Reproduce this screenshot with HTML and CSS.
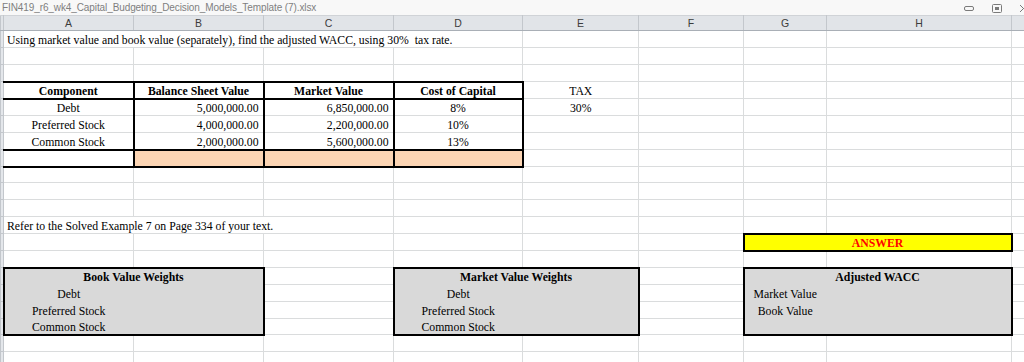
FILE: index.html
```html
<!DOCTYPE html>
<html>
<head>
<meta charset="utf-8">
<link rel="stylesheet" href="styles.css">
</head>
<body>
<div class="titlebar">
  <span class="doc-title">FIN419_r6_wk4_Capital_Budgeting_Decision_Models_Template (7).xlsx</span>
  <span class="win-ctrls">
    <svg class="ic-min" width="10" height="6" viewBox="0 0 10 6"><rect x="0.5" y="1.5" width="9" height="4" rx="1.5" fill="none" stroke="#7a7a7a"/></svg>
    <svg class="ic-rest" width="10" height="9" viewBox="0 0 10 9"><rect x="0.5" y="0.5" width="9" height="8" rx="1" fill="none" stroke="#7a7a7a"/><rect x="3" y="3" width="4" height="3" fill="#7a7a7a"/></svg>
    <svg class="ic-close" width="4" height="9" viewBox="0 0 4 9"><path d="M0 1 L4 5 M0 8 L4 4" stroke="#7a7a7a" fill="none"/></svg>
  </span>
</div>
<table class="sheet">
  <colgroup>
    <col class="c-rh"><col class="c-a"><col class="c-b"><col class="c-c"><col class="c-d"><col class="c-e"><col class="c-f"><col class="c-g"><col class="c-h"><col class="c-i">
  </colgroup>
  <thead>
    <tr class="colhdr">
      <th class="rh"></th><th>A</th><th>B</th><th>C</th><th>D</th><th>E</th><th>F</th><th>G</th><th>H</th><th></th>
    </tr>
  </thead>
  <tbody>
    <tr>
      <td class="rh"></td><td colspan="4">Using market value and book value (separately), find the adjusted WACC, using 30%&nbsp; tax rate.</td><td></td><td></td><td></td><td></td><td></td>
    </tr>
    <tr><td class="rh"></td><td></td><td></td><td></td><td></td><td></td><td></td><td></td><td></td><td></td></tr>
    <tr><td class="rh"></td><td></td><td></td><td></td><td></td><td></td><td></td><td></td><td></td><td></td></tr>
    <tr class="t-head">
      <td class="rh"></td><td class="th ctr vr">Component</td><td class="th ctr vr">Balance Sheet Value</td><td class="th ctr vr">Market Value</td><td class="th ctr vr">Cost of Capital</td><td class="ctr">TAX</td><td></td><td></td><td></td><td></td>
    </tr>
    <tr>
      <td class="rh"></td><td class="ctr vr">Debt</td><td class="num vr">5,000,000.00</td><td class="num vr">6,850,000.00</td><td class="ctr vr">8%</td><td class="ctr">30%</td><td></td><td></td><td></td><td></td>
    </tr>
    <tr>
      <td class="rh"></td><td class="ctr vr">Preferred Stock</td><td class="num vr">4,000,000.00</td><td class="num vr">2,200,000.00</td><td class="ctr vr">10%</td><td></td><td></td><td></td><td></td><td></td>
    </tr>
    <tr class="t-last">
      <td class="rh"></td><td class="ctr vr">Common Stock</td><td class="num vr">2,000,000.00</td><td class="num vr">5,600,000.00</td><td class="ctr vr">13%</td><td></td><td></td><td></td><td></td><td></td>
    </tr>
    <tr class="t-total">
      <td class="rh"></td><td class="vr"></td><td class="vr peach"></td><td class="vr peach"></td><td class="vr peach"></td><td></td><td></td><td></td><td></td><td></td>
    </tr>
    <tr class="short"><td class="rh"></td><td></td><td></td><td></td><td></td><td></td><td></td><td></td><td></td><td></td></tr>
    <tr><td class="rh"></td><td></td><td></td><td></td><td></td><td></td><td></td><td></td><td></td><td></td></tr>
    <tr><td class="rh"></td><td></td><td></td><td></td><td></td><td></td><td></td><td></td><td></td><td></td></tr>
    <tr>
      <td class="rh"></td><td colspan="3">Refer to the Solved Example 7 on Page 334 of your text.</td><td></td><td></td><td></td><td></td><td></td><td></td>
    </tr>
    <tr>
      <td class="rh"></td><td></td><td></td><td></td><td></td><td></td><td></td><td colspan="2" class="answer">ANSWER</td><td></td>
    </tr>
    <tr><td class="rh"></td><td></td><td></td><td></td><td></td><td></td><td></td><td></td><td></td><td></td></tr>
    <tr>
      <td class="rh"></td>
      <td colspan="2" class="box box-top th ctr">Book Value Weights</td>
      <td></td>
      <td colspan="2" class="box box-top th ctr">Market Value Weights</td>
      <td></td>
      <td colspan="2" class="box box-top th ctr">Adjusted WACC</td>
      <td></td>
    </tr>
    <tr>
      <td class="rh"></td>
      <td class="box box-l ctr">Debt</td><td class="box box-r"></td>
      <td></td>
      <td class="box box-l ctr">Debt</td><td class="box box-r"></td>
      <td></td>
      <td class="box box-l ctr">Market Value</td><td class="box box-r"></td>
      <td></td>
    </tr>
    <tr>
      <td class="rh"></td>
      <td class="box box-l ctr">Preferred Stock</td><td class="box box-r"></td>
      <td></td>
      <td class="box box-l ctr">Preferred Stock</td><td class="box box-r"></td>
      <td></td>
      <td class="box box-l ctr">Book Value</td><td class="box box-r"></td>
      <td></td>
    </tr>
    <tr class="short">
      <td class="rh"></td>
      <td class="box box-l box-b ctr">Common Stock</td><td class="box box-r box-b"></td>
      <td></td>
      <td class="box box-l box-b ctr">Common Stock</td><td class="box box-r box-b"></td>
      <td></td>
      <td class="box box-l box-b"></td><td class="box box-r box-b"></td>
      <td></td>
    </tr>
    <tr><td class="rh"></td><td></td><td></td><td></td><td></td><td></td><td></td><td></td><td></td><td></td></tr>
    <tr><td class="rh"></td><td></td><td></td><td></td><td></td><td></td><td></td><td></td><td></td><td></td></tr>
  </tbody>
</table>
</body>
</html>
```
FILE: styles.css
```css
html, body {
  margin: 0;
  padding: 0;
  background: #ffffff;
  overflow: hidden;
}

.titlebar {
  height: 15px;
  display: flex;
  align-items: center;
  justify-content: space-between;
  background: #f8f8f8;
  padding-left: 2px;
  box-sizing: border-box;
}

.doc-title {
  font-family: "Liberation Sans", Arial, sans-serif;
  font-size: 10px;
  color: #7f7f7f;
  white-space: nowrap;
  letter-spacing: -0.1px;
}

.win-ctrls {
  display: flex;
  align-items: center;
  gap: 18px;
  padding-top: 1px;
}

.sheet {
  border-collapse: collapse;
  table-layout: fixed;
  width: 1024px;
  font-family: "Liberation Serif", "Times New Roman", serif;
  font-size: 11.75px;
  color: #000;
}

.c-rh { width: 3px; }
.c-a { width: 130px; }
.c-b { width: 130px; }
.c-c { width: 130px; }
.c-d { width: 129px; }
.c-e { width: 116px; }
.c-f { width: 105px; }
.c-g { width: 83px; }
.c-h { width: 185px; }
.c-i { width: 13px; }

.sheet tr.colhdr {
  height: 15px;
}

.colhdr th {
  padding: 0;
  background: #e1e4e8;
  border: 1px solid #c3c7cc;
  border-top-color: #d0d3d7;
  border-bottom-color: #a9afb6;
  font-family: "Liberation Sans", Arial, sans-serif;
  font-weight: normal;
  font-size: 10.5px;
  line-height: 12px;
  color: #3c3c3c;
  text-align: center;
  vertical-align: middle;
}

.sheet tbody tr {
  height: 17px;
}

.sheet tbody tr.short {
  height: 16px;
}

.sheet td {
  padding: 0 3px;
  border: 1px solid #dadcdd;
  line-height: 13px;
  vertical-align: bottom;
  white-space: nowrap;
  overflow: hidden;
}

.sheet td.rh {
  padding: 0;
  background: #e4e7eb;
  border-color: #c3c7cc;
}

.ctr { text-align: center; }
.num { text-align: right; padding-right: 4px !important; }
.th { font-weight: bold; }

.t-head td.th {
  border-top: 2px solid #000;
  border-bottom: 2px solid #000;
}

.vr { border-right: 2px solid #000 !important; }

.t-last td.vr {
  border-bottom: 2px solid #000;
}

.t-total td.vr {
  border-bottom: 2px solid #000;
}

.peach { background: #fcd5b4; }

.answer {
  background: #ffff00;
  border: 2px solid #000 !important;
  color: #ff0000;
  font-weight: bold;
  text-align: center;
}

.sheet td.box {
  background: #d9d9d9;
  border-color: #d9d9d9;
}

.sheet td.box-top {
  border: 2px solid #000;
  border-bottom-color: #d9d9d9;
  border-bottom-width: 1px;
}

.sheet td.box-l { border-left: 2px solid #000; }
.sheet td.box-r { border-right: 2px solid #000; }
.sheet td.box-b { border-bottom: 2px solid #000; }
```
